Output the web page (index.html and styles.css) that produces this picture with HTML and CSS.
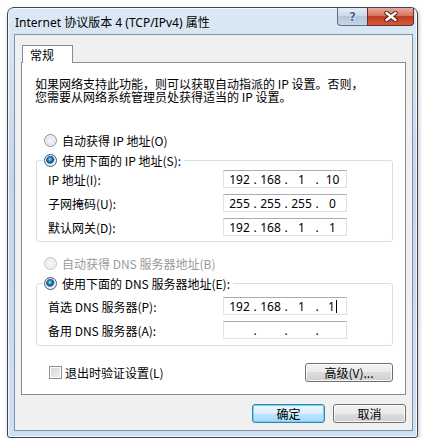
FILE: index.html
```html
<!DOCTYPE html>
<html lang="zh-CN">
<head>
    <meta charset="UTF-8">
    <title>Internet 协议版本 4 (TCP/IPv4) 属性</title>
    <link rel="stylesheet" href="styles.css">
</head>
<body>

<div class="window">
    <div class="titlebar">
        <span class="title">Internet 协议版本 4 (TCP/IPv4) 属性</span>
        <div class="caption-buttons">
            <span class="cap-btn help">?</span>
            <span class="cap-btn close">
                <svg width="14" height="11" viewBox="0 0 14 11">
                    <path d="M2.5 2 L11.5 9 M11.5 2 L2.5 9" stroke="#4a1a12" stroke-width="4.4" stroke-linecap="round"/>
                    <path d="M2.5 2 L11.5 9 M11.5 2 L2.5 9" stroke="#fff" stroke-width="2.6" stroke-linecap="round"/>
                </svg>
            </span>
        </div>
    </div>

    <div class="client">
        <div class="tabs">
            <span class="tab">常规</span>
        </div>
        <div class="panel">
            <p class="intro">如果网络支持此功能，则可以获取自动指派的 IP 设置。否则，<br>您需要从网络系统管理员处获得适当的 IP 设置。</p>

            <div class="option first">
                <span class="radio"></span>
                <span>自动获得 IP 地址(O)</span>
            </div>
            <fieldset class="group">
                <legend class="option">
                    <span class="radio on"></span>
                    <span>使用下面的 IP 地址(S):</span>
                </legend>
                <div class="row">
                    <span class="label">IP 地址(I):</span>
                    <span class="ipbox"><span class="oct">192</span><span class="dot">.</span><span class="oct">168</span><span class="dot">.</span><span class="oct">1</span><span class="dot">.</span><span class="oct">10</span></span>
                </div>
                <div class="row">
                    <span class="label">子网掩码(U):</span>
                    <span class="ipbox"><span class="oct">255</span><span class="dot">.</span><span class="oct">255</span><span class="dot">.</span><span class="oct">255</span><span class="dot">.</span><span class="oct">0</span></span>
                </div>
                <div class="row">
                    <span class="label">默认网关(D):</span>
                    <span class="ipbox"><span class="oct">192</span><span class="dot">.</span><span class="oct">168</span><span class="dot">.</span><span class="oct">1</span><span class="dot">.</span><span class="oct">1</span></span>
                </div>
            </fieldset>

            <div class="option second disabled">
                <span class="radio"></span>
                <span>自动获得 DNS 服务器地址(B)</span>
            </div>
            <fieldset class="group dns">
                <legend class="option">
                    <span class="radio on"></span>
                    <span>使用下面的 DNS 服务器地址(E):</span>
                </legend>
                <div class="row">
                    <span class="label">首选 DNS 服务器(P):</span>
                    <span class="ipbox"><span class="oct">192</span><span class="dot">.</span><span class="oct">168</span><span class="dot">.</span><span class="oct">1</span><span class="dot">.</span><span class="oct">1<span class="caret"></span></span></span>
                </div>
                <div class="row">
                    <span class="label">备用 DNS 服务器(A):</span>
                    <span class="ipbox"><span class="oct"></span><span class="dot">.</span><span class="oct"></span><span class="dot">.</span><span class="oct"></span><span class="dot">.</span><span class="oct"></span></span>
                </div>
            </fieldset>

            <div class="footer-row">
                <span class="check-wrap">
                    <span class="checkbox"></span>
                    <span>退出时验证设置(L)</span>
                </span>
                <button class="btn advanced">高级(V)...</button>
            </div>
        </div>

        <div class="dialog-buttons">
            <button class="btn default">确定</button>
            <button class="btn">取消</button>
        </div>
    </div>
</div>

</body>
</html>
```

FILE: styles.css
```css
body {
    margin: 0;
    background: #fff;
    font-family: "Noto Sans", "Noto Sans CJK SC", sans-serif;
    font-size: 12px;
    color: #000;
}
.window {
    box-sizing: border-box;
    width: 411px;
    height: 431px;
    margin: 7px 0 0 7px;
    border: 1px solid #3b4756;
    border-radius: 7px 7px 3px 3px;
    background: linear-gradient(#dce8f5, #c4d7ec 40%, #cfe0f2);
    box-shadow: inset 0 0 0 1px rgba(255, 255, 255, 0.7), 1px 2px 4px rgba(0, 0, 0, 0.25);
    display: flex;
    flex-direction: column;
}
.titlebar {
    height: 26px;
    display: flex;
    align-items: flex-start;
    flex-shrink: 0;
}
.title {
    padding: 7px 0 0 7px;
    line-height: 16px;
    font-family: "Noto Sans", "Noto Sans CJK SC", sans-serif;
}
.caption-buttons {
    margin-left: auto;
    margin-right: 3px;
    display: flex;
}
.cap-btn {
    height: 18px;
    display: flex;
    align-items: center;
    justify-content: center;
    box-sizing: border-box;
    border: 1px solid #5f6f83;
    border-top: none;
}
.help {
    width: 30px;
    border-right: none;
    border-radius: 0 0 0 4px;
    background: linear-gradient(#e4ecf6, #c9d7e7 50%, #b4c6db 50%, #c5d6e8);
    color: #56657a;
    font-family: "DejaVu Sans", sans-serif;
    font-weight: bold;
    font-size: 12px;
    text-shadow: 0 0 2px #fff, 0 0 1px #fff;
}
.close {
    width: 47px;
    border-radius: 0 0 4px 0;
    border-color: #6a2c22;
    background: linear-gradient(#e9a99a, #d8745e 45%, #c13d22 50%, #d35a3c 100%);
}
.client {
    flex: 1;
    margin: 0 4px 6px 6px;
    border: 1px solid #8291a3;
    background: #f0f0f0;
    padding: 10px 6px 0 6px;
    display: flex;
    flex-direction: column;
}
.tabs {
    display: flex;
}
.tab {
    position: relative;
    z-index: 1;
    margin: 0 0 -1px 1px;
    width: 51px;
    height: 18px;
    box-sizing: border-box;
    border: 1px solid #898c95;
    border-bottom: none;
    background: #fff;
    padding: 1px 0 0 7px;
    line-height: 16px;
    font-family: "Noto Sans CJK SC", sans-serif;
}
.panel {
    box-sizing: border-box;
    height: 333px;
    border: 1px solid #898c95;
    background: #fff;
    padding: 14px 12px 0 13px;
    font-family: "Noto Sans CJK SC", sans-serif;
}
.intro {
    margin: 0;
    line-height: 13px;
    white-space: nowrap;
}
.option {
    display: flex;
    align-items: center;
    gap: 5px;
    height: 16px;
    padding-left: 9px;
}
.option.first {
    margin-top: 29px;
}
.option.second {
    margin-top: 13px;
}
.option.disabled {
    color: #9a9a9a;
}
.radio {
    box-sizing: border-box;
    width: 13px;
    height: 13px;
    border-radius: 50%;
    border: 1px solid #8e8f8f;
    background: radial-gradient(circle at 50% 50%, #fafafa 0, #e8e8e8 45%, #d0d0d0 100%);
    box-shadow: inset 0 0 0 1px #f4f4f4;
}
.disabled .radio {
    border-color: #c3c3c3;
    background: radial-gradient(circle, #f8f8f8 0, #ececec 60%, #e2e2e2 100%);
}
.radio.on {
    border-color: #3c5a77;
    background: radial-gradient(circle at 45% 40%, #bfe8ff 0, #3597d8 1.5px, #0f4d80 3.5px, #6fa6cc 4.2px, #f2f2f2 5px, #e0e0e0 100%);
}
.group {
    margin: 4px 0 0 1px;
    padding: 2px 45px 5px 11px;
    border: 1px solid #d5dfe5;
    border-radius: 3px;
    display: flex;
    flex-direction: column;
    gap: 6px;
}
.group.dns {
    padding-top: 6px;
    padding-bottom: 6px;
}
.group legend {
    margin-left: -5px;
    padding: 0 3px 0 1px;
}
.row {
    display: flex;
    align-items: center;
    height: 18px;
}
.label {
    width: 175px;
}
.ipbox {
    box-sizing: border-box;
    width: 124px;
    height: 18px;
    border: 1px solid #dde2e8;
    border-top-color: #abadb3;
    border-left-color: #e2e3ea;
    padding-left: 2px;
    display: flex;
    align-items: center;
    font-family: "Noto Sans", sans-serif;
    font-size: 12px;
    background: #fff;
}
.oct {
    width: 27px;
    text-align: center;
}
.dot {
    width: 4px;
    text-align: center;
}
.caret {
    display: inline-block;
    width: 1px;
    height: 13px;
    margin-left: 1px;
    background: #000;
    vertical-align: -2px;
}
.footer-row {
    display: flex;
    align-items: center;
    justify-content: space-between;
    margin-top: 17px;
    height: 19px;
}
.check-wrap {
    display: flex;
    align-items: center;
    gap: 3px;
    margin-left: 14px;
}
.checkbox {
    box-sizing: border-box;
    width: 13px;
    height: 13px;
    border: 1px solid #8e8f8f;
    background: linear-gradient(135deg, #d0d4d9, #f4f4f4);
    box-shadow: inset 0 0 0 1px #fff;
}
.btn {
    height: 19px;
    box-sizing: border-box;
    border: 1px solid #707070;
    border-radius: 3px;
    background: linear-gradient(#f2f2f2, #ebebeb 50%, #dddddd 50%, #cfcfcf);
    box-shadow: inset 0 0 0 1px rgba(255, 255, 255, 0.8);
    font-family: "Noto Sans CJK SC", sans-serif;
    font-size: 12px;
    line-height: 16px;
    padding: 0;
    color: #000;
}
.advanced {
    width: 88px;
}
.dialog-buttons {
    display: flex;
    justify-content: flex-end;
    gap: 8px;
    margin-top: 9px;
}
.dialog-buttons .btn {
    width: 73px;
}
.btn.default {
    border-color: #3c7fb1;
    background: linear-gradient(#eaf6fd, #d9f0fc 50%, #bee6fd 50%, #a7d9f5);
    box-shadow: inset 0 0 0 1px #6fd5f8;
}
```
